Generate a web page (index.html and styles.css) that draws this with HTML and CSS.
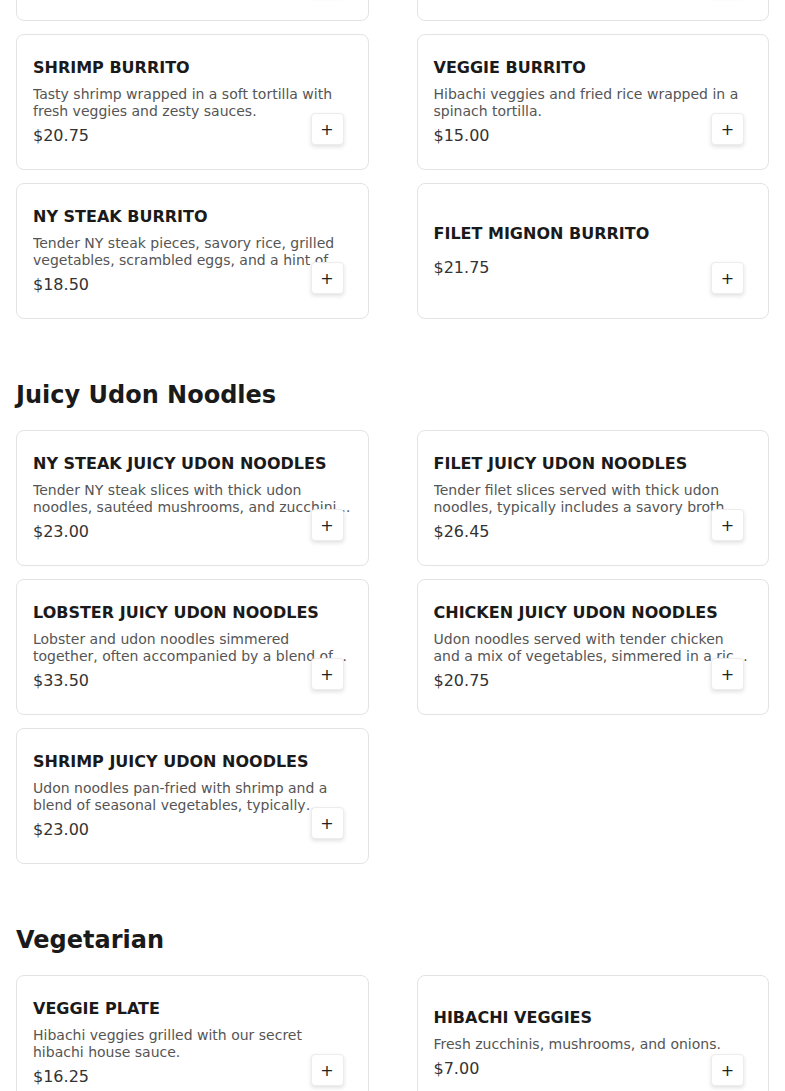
FILE: index.html
```html
<!DOCTYPE html>
<html>
<head>
    <meta charset="UTF-8">
    <meta name="viewport" content="width=device-width, initial-scale=1.0">
    <link rel="stylesheet" href="styles.css">
</head>
<body>
    <div class="menu">
        <!-- 捲動中：上一排卡片只露出底部 -->
        <section class="menu-section">
            <div class="item-grid">
                <div class="item-card">
                    <div class="item-name">CHICKEN BURRITO</div>
                    <div class="item-desc">Grilled chicken, hibachi rice and veggies wrapped in a warm tortilla.</div>
                    <div class="item-price">$15.75</div>
                    <button class="add-btn">+</button>
                </div>
                <div class="item-card">
                    <div class="item-name">STEAK BURRITO</div>
                    <div class="item-desc">Tender steak, fried rice and vegetables wrapped in a tortilla.</div>
                    <div class="item-price">$18.50</div>
                    <button class="add-btn">+</button>
                </div>
                <div class="item-card">
                    <div class="item-name">SHRIMP BURRITO</div>
                    <div class="item-desc">Tasty shrimp wrapped in a soft tortilla with fresh veggies and zesty sauces.</div>
                    <div class="item-price">$20.75</div>
                    <button class="add-btn">+</button>
                </div>
                <div class="item-card">
                    <div class="item-name">VEGGIE BURRITO</div>
                    <div class="item-desc">Hibachi veggies and fried rice wrapped in a spinach tortilla.</div>
                    <div class="item-price">$15.00</div>
                    <button class="add-btn">+</button>
                </div>
                <div class="item-card">
                    <div class="item-name">NY STEAK BURRITO</div>
                    <div class="item-desc">Tender NY steak pieces, savory rice, grilled vegetables, scrambled eggs, and a hint of hibachi sauce wrapped in a tortilla.</div>
                    <div class="item-price">$18.50</div>
                    <button class="add-btn">+</button>
                </div>
                <div class="item-card">
                    <div class="item-name">FILET MIGNON BURRITO</div>
                    <div class="item-price">$21.75</div>
                    <button class="add-btn">+</button>
                </div>
            </div>
        </section>

        <section class="menu-section">
            <h2 class="section-title">Juicy Udon Noodles</h2>
            <div class="item-grid">
                <div class="item-card">
                    <div class="item-name">NY STEAK JUICY UDON NOODLES</div>
                    <div class="item-desc">Tender NY steak slices with thick udon noodles, sautéed mushrooms, and zucchini in a savory sauce.</div>
                    <div class="item-price">$23.00</div>
                    <button class="add-btn">+</button>
                </div>
                <div class="item-card">
                    <div class="item-name">FILET JUICY UDON NOODLES</div>
                    <div class="item-desc">Tender filet slices served with thick udon noodles, typically includes a savory broth.</div>
                    <div class="item-price">$26.45</div>
                    <button class="add-btn">+</button>
                </div>
                <div class="item-card">
                    <div class="item-name">LOBSTER JUICY UDON NOODLES</div>
                    <div class="item-desc">Lobster and udon noodles simmered together, often accompanied by a blend of vegetables.</div>
                    <div class="item-price">$33.50</div>
                    <button class="add-btn">+</button>
                </div>
                <div class="item-card">
                    <div class="item-name">CHICKEN JUICY UDON NOODLES</div>
                    <div class="item-desc">Udon noodles served with tender chicken and a mix of vegetables, simmered in a rich broth.</div>
                    <div class="item-price">$20.75</div>
                    <button class="add-btn">+</button>
                </div>
                <div class="item-card">
                    <div class="item-name">SHRIMP JUICY UDON NOODLES</div>
                    <div class="item-desc">Udon noodles pan-fried with shrimp and a blend of seasonal vegetables, typically seasoned with soy sauce.</div>
                    <div class="item-price">$23.00</div>
                    <button class="add-btn">+</button>
                </div>
            </div>
        </section>

        <section class="menu-section">
            <h2 class="section-title">Vegetarian</h2>
            <div class="item-grid">
                <div class="item-card">
                    <div class="item-name">VEGGIE PLATE</div>
                    <div class="item-desc">Hibachi veggies grilled with our secret hibachi house sauce.</div>
                    <div class="item-price">$16.25</div>
                    <button class="add-btn">+</button>
                </div>
                <div class="item-card">
                    <div class="item-name">HIBACHI VEGGIES</div>
                    <div class="item-desc">Fresh zucchinis, mushrooms, and onions.</div>
                    <div class="item-price">$7.00</div>
                    <button class="add-btn">+</button>
                </div>
            </div>
        </section>
    </div>
</body>
</html>
```

FILE: styles.css
```css
body {
    margin: 0;
    font-family: "DejaVu Sans", Verdana, sans-serif;
    color: #1a1a1a;
    background: #fff;
}

.menu {
    padding: 0 16px;
    margin-top: -115px; /* 頁面已向下捲動 */
    display: flex;
    flex-direction: column;
    gap: 60px;
}

.section-title {
    margin: 0 0 19px;
    font-size: 24px;
    line-height: 32px;
    font-weight: bold;
    color: #1a1a1a;
}

.item-grid {
    display: grid;
    grid-template-columns: 1fr 1fr;
    column-gap: 48px;
    row-gap: 13px;
}

.item-card {
    position: relative;
    min-height: 136px;
    box-sizing: border-box;
    padding: 16px;
    border: 1px solid #e3e3e3;
    border-radius: 8px;
    display: flex;
    flex-direction: column;
    justify-content: center;
}

.item-name {
    font-size: 16px;
    line-height: 24px;
    font-weight: bold;
    margin-bottom: 6px;
    color: #1a1a1a;
}

.item-desc {
    font-size: 14px;
    line-height: 17px;
    color: #555;
    display: -webkit-box;
    -webkit-line-clamp: 2;
    -webkit-box-orient: vertical;
    overflow: hidden;
}

.item-price {
    margin-top: 4px;
    font-size: 16px;
    line-height: 24px;
    color: #333;
}

/* 加入購物車按鈕 */
.add-btn {
    position: absolute;
    right: 24px;
    bottom: 24px;
    width: 33px;
    height: 32px;
    padding: 0;
    border: 1px solid #ececec;
    border-radius: 4px;
    background: #fff;
    box-shadow: 0 2px 4px rgba(0, 0, 0, 0.12);
    font-family: "DejaVu Sans", sans-serif;
    font-size: 16px;
    color: #222;
    cursor: pointer;
}
```
